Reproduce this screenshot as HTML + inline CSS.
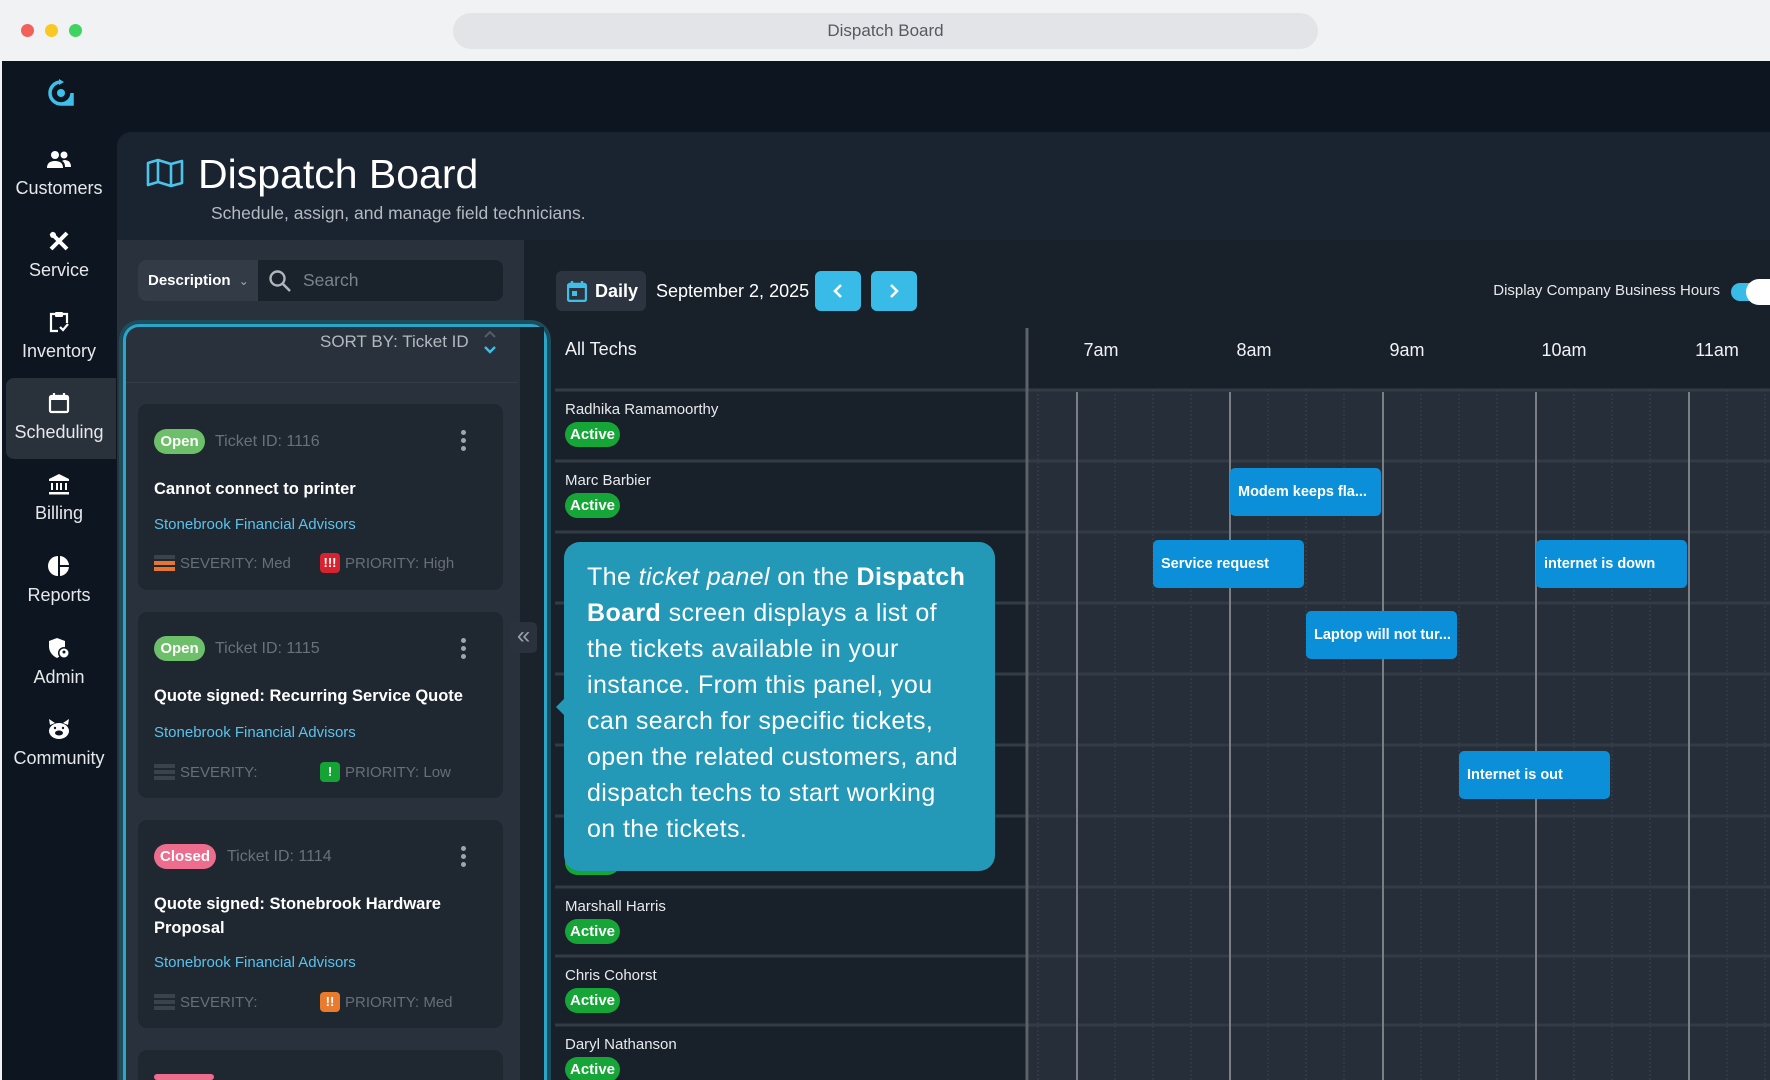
<!DOCTYPE html>
<html style="overflow:hidden;width:1770px;height:1080px"><head><meta charset="utf-8">
<style>
*{margin:0;padding:0;box-sizing:border-box}
body{width:1770px;height:1080px;overflow:hidden;background:#f2f3f5;font-family:"Liberation Sans",Arial,sans-serif;position:relative}
.a{position:absolute}
.nav{position:absolute;left:2px;width:114px;text-align:center;color:#e6e8ea;font-size:18px}
.nav svg{display:block;margin:0 auto 8px}
.card{position:absolute;left:138px;width:365px;background:#1f2731;border-radius:9px}
.badge{position:absolute;left:16px;height:25px;border-radius:13px;color:#fff;font-weight:bold;font-size:15px;line-height:25px;text-align:center}
.tid{position:absolute;color:#697079;font-size:16px}
.dots{position:absolute;left:323px;width:5px}
.dots i{display:block;width:5px;height:5px;border-radius:50%;background:#a0a5ab;margin-bottom:3px}
.ttl{position:absolute;left:16px;right:20px;color:#fff;font-weight:bold;font-size:16.5px;line-height:24px}
.lnk{position:absolute;left:16px;color:#5dc1ea;font-size:15px}
.sev{position:absolute;left:16px;color:#676e77;font-size:15px;display:flex;align-items:center}
.bars{width:21px;margin-right:5px}
.bars i{display:block;height:4px;margin:2px 0;background:#3a424c}
.pri{position:absolute;left:182px;color:#676e77;font-size:15px;display:flex;align-items:center}
.pi{width:20px;height:20px;border-radius:4px;color:#fff;font-weight:bold;font-size:13px;text-align:center;line-height:20px;margin-right:5px}
.name{position:absolute;left:565px;color:#e8eaec;font-size:15px}
.act{position:absolute;left:565px;width:55px;height:25px;border-radius:13px;background:#16a637;color:#fff;font-weight:bold;font-size:15px;line-height:25px;text-align:center}
.ev{position:absolute;height:48px;background:#0a8fd8;border-radius:5px;color:#fff;font-weight:bold;font-size:14.5px;line-height:48px;padding-left:8px;white-space:nowrap;overflow:hidden}
.hr{position:absolute;top:340px;color:#f0f2f4;font-size:18px;transform:translateX(-50%)}
</style></head><body>
<div class="a" style="left:0;top:0;width:1770px;height:61px;background:#f1f2f4"></div>
<div class="a" style="left:21px;top:24px;width:13px;height:13px;border-radius:50%;background:#f2605b"></div>
<div class="a" style="left:45px;top:24px;width:13px;height:13px;border-radius:50%;background:#f9c823"></div>
<div class="a" style="left:69px;top:24px;width:13px;height:13px;border-radius:50%;background:#3fd461"></div>
<div class="a" style="left:453px;top:13px;width:865px;height:36px;border-radius:18px;background:#e3e4e7;text-align:center;line-height:36px;color:#555a60;font-size:17px">Dispatch Board</div>
<div class="a" style="left:2px;top:61px;width:1768px;height:1019px;background:#0d1620;overflow:hidden"></div>
<svg class="a" style="left:46px;top:78px" width="30" height="30" viewBox="0 0 30 30"><path d="M15 4 A11 11 0 1 0 26 15 L26 26 L15 26" fill="none" stroke="#3ec0ea" stroke-width="3.5"/><circle cx="15" cy="15" r="4" fill="#3ec0ea"/><path d="M13 1 L18 4 L13 7Z" fill="#3ec0ea"/></svg>
<div class="nav" style="top:150px"><svg width="24" height="20" viewBox="0 0 24 20"><circle cx="8" cy="5" r="4" fill="#fff"/><circle cx="17" cy="5" r="3.5" fill="#fff"/><path d="M0 18 Q0 11 8 11 Q16 11 16 18Z M17 10 Q24 10 24 17 L18 17 Q18 12 15 11Z" fill="#fff"/></svg>Customers</div>
<div class="nav" style="top:230px"><svg width="22" height="22" viewBox="0 0 22 22"><path d="M3 3 L19 19 M19 3 L3 19" stroke="#fff" stroke-width="4"/><circle cx="5" cy="5" r="3" fill="#fff"/></svg>Service</div>
<div class="nav" style="top:311px"><svg width="20" height="22" viewBox="0 0 20 22"><path d="M6 3 H2 V20 H9 M14 3 H18 V12" fill="none" stroke="#fff" stroke-width="2.2"/><rect x="6" y="1" width="8" height="5" rx="1" fill="#fff"/><path d="M11 16 L14 19 L19 13" fill="none" stroke="#fff" stroke-width="2.2"/></svg>Inventory</div>
<div class="a" style="left:6px;top:378px;width:110px;height:81px;background:#29313b;border-radius:8px 0 0 8px"></div>
<div class="nav" style="top:392px"><svg width="22" height="22" viewBox="0 0 22 22"><rect x="2" y="4" width="18" height="16" rx="1.5" fill="none" stroke="#fff" stroke-width="2.2"/><rect x="2" y="4" width="18" height="4" fill="#fff"/><path d="M6 1V5M16 1V5" stroke="#fff" stroke-width="2.2"/></svg>Scheduling</div>
<div class="nav" style="top:473px"><svg width="22" height="22" viewBox="0 0 22 22"><path d="M11 1 L21 6 L21 8 L1 8 L1 6Z" fill="#fff"/><path d="M4 10V17M9 10V17M13 10V17M18 10V17" stroke="#fff" stroke-width="2"/><rect x="1" y="19" width="20" height="2.5" fill="#fff"/></svg>Billing</div>
<div class="nav" style="top:555px"><svg width="22" height="22" viewBox="0 0 22 22"><path d="M10 1 A10 10 0 1 0 10 21Z" fill="#fff"/><path d="M12 1 A10 10 0 0 1 21 10 L12 10Z M12 12 L21 12 A10 10 0 0 1 12 21Z" fill="#fff"/></svg>Reports</div>
<div class="nav" style="top:637px"><svg width="22" height="22" viewBox="0 0 22 22"><path d="M9 1 L17 4 V9 Q17 17 9 21 Q1 17 1 9 V4Z" fill="#fff"/><circle cx="16" cy="16" r="6" fill="#0d1620"/><circle cx="16" cy="16" r="4.5" fill="#fff"/><circle cx="16" cy="15" r="1.5" fill="#0d1620"/></svg>Admin</div>
<div class="nav" style="top:718px"><svg width="24" height="22" viewBox="0 0 24 22"><ellipse cx="12" cy="13" rx="10" ry="8" fill="#fff"/><path d="M3 7 L2 1 L8 5Z M21 7 L22 1 L16 5Z" fill="#fff"/><ellipse cx="12" cy="15" rx="4" ry="2.5" fill="#0d1620"/><circle cx="8" cy="10" r="1.2" fill="#0d1620"/><circle cx="16" cy="10" r="1.2" fill="#0d1620"/></svg>Community</div>
<div class="a" style="left:117px;top:132px;width:1653px;height:108px;background:#1a2330;border-radius:14px 0 0 0"></div>
<svg class="a" style="left:146px;top:158px" width="38" height="30" viewBox="0 0 38 30"><path d="M2 5 L12 2 L25 6 L36 3 V25 L25 28 L12 24 L2 27Z M12 2 V24 M25 6 V28" fill="none" stroke="#4ec3ea" stroke-width="2.6" stroke-linejoin="round"/></svg>
<div class="a" style="left:198px;top:150px;color:#fff;font-size:41px;line-height:48px">Dispatch Board</div>
<div class="a" style="left:211px;top:203px;color:#b5bac0;font-size:17.5px">Schedule, assign, and manage field technicians.</div>
<div class="a" style="left:117px;top:240px;width:407px;height:840px;background:#28313c"></div>
<div class="a" style="left:138px;top:260px;width:365px;height:41px;background:#1a222c;border-radius:8px"></div>
<div class="a" style="left:138px;top:260px;width:120px;height:41px;background:#323b46;border-radius:8px 0 0 8px;color:#fff;font-weight:bold;font-size:15px;line-height:41px;padding-left:10px">Description <span style="font-weight:normal;color:#aaa;font-size:12px;margin-left:4px">&#8964;</span></div>
<svg class="a" style="left:268px;top:269px" width="24" height="24" viewBox="0 0 24 24"><circle cx="9.5" cy="9.5" r="7" fill="none" stroke="#b0b5bb" stroke-width="2.4"/><path d="M15 15 L22 22" stroke="#b0b5bb" stroke-width="2.6"/></svg>
<div class="a" style="left:303px;top:270px;color:#7b828a;font-size:17.5px">Search</div>
<div class="a" style="left:524px;top:240px;width:1246px;height:840px;background:#18202a"></div>
<div class="a" style="left:119px;top:320px;width:432px;height:760px;border:4px solid #1d4c5d;border-bottom:none;border-radius:20px 20px 0 0"></div>
<div class="a" style="left:123px;top:324px;width:424px;height:756px;border:3px solid #2aa6c8;border-bottom:none;border-radius:16px 16px 0 0;background:#28313c"></div>
<div class="a" style="left:126px;top:382px;width:392px;height:1px;background:#333c47"></div>
<div class="a" style="left:520px;top:327px;width:24px;height:753px;background:#1a222c"></div>
<div class="a" style="left:320px;top:332px;color:#b4b9bf;font-size:17px">SORT BY: Ticket ID</div>
<svg class="a" style="left:482px;top:329px" width="16" height="28" viewBox="0 0 16 28"><path d="M3 8 L8 3 L13 8" fill="none" stroke="#555d66" stroke-width="2"/><path d="M3 18 L8 23 L13 18" fill="none" stroke="#3ebfe8" stroke-width="2.4"/></svg>
<div class="card" style="top:404px;height:186px">
 <div class="badge" style="top:25px;width:51px;background:#6dbf69">Open</div>
 <div class="tid" style="left:77px;top:25px;line-height:25px">Ticket ID: 1116</div>
 <div class="dots" style="top:26px"><i></i><i></i><i></i></div>
 <div class="ttl" style="top:73px">Cannot connect to printer</div>
 <div class="lnk" style="top:112px">Stonebrook Financial Advisors</div>
 <div class="sev" style="top:149px"><div class="bars"><i></i><i style="background:#e8742d"></i><i style="background:#e8742d"></i></div>SEVERITY: Med</div>
 <div class="pri" style="top:149px"><div class="pi" style="background:#d8232e">!!!</div>PRIORITY: High</div>
</div>
<div class="card" style="top:612px;height:186px">
 <div class="badge" style="top:24px;width:51px;background:#6dbf69">Open</div>
 <div class="tid" style="left:77px;top:24px;line-height:25px">Ticket ID: 1115</div>
 <div class="dots" style="top:26px"><i></i><i></i><i></i></div>
 <div class="ttl" style="top:72px">Quote signed: Recurring Service Quote</div>
 <div class="lnk" style="top:112px">Stonebrook Financial Advisors</div>
 <div class="sev" style="top:150px"><div class="bars"><i></i><i></i><i></i></div>SEVERITY:</div>
 <div class="pri" style="top:150px"><div class="pi" style="background:#14a334">!</div>PRIORITY: Low</div>
</div>
<div class="card" style="top:820px;height:208px">
 <div class="badge" style="top:24px;width:62px;background:#ec6d8e">Closed</div>
 <div class="tid" style="left:89px;top:24px;line-height:25px">Ticket ID: 1114</div>
 <div class="dots" style="top:26px"><i></i><i></i><i></i></div>
 <div class="ttl" style="top:72px">Quote signed: Stonebrook Hardware<br>Proposal</div>
 <div class="lnk" style="top:134px">Stonebrook Financial Advisors</div>
 <div class="sev" style="top:172px"><div class="bars"><i></i><i></i><i></i></div>SEVERITY:</div>
 <div class="pri" style="top:172px"><div class="pi" style="background:#ea7a2c">!!</div>PRIORITY: Med</div>
</div>
<div class="card" style="top:1050px;height:30px;border-radius:9px 9px 0 0"><div class="badge" style="top:24px;width:60px;height:6px;background:#ec6d8e"></div></div>
<div class="a" style="left:510px;top:622px;width:27px;height:31px;background:#2a323d;border-radius:5px;color:#9aa0a7;font-size:24px;line-height:28px;text-align:center">&laquo;</div>
<div class="a" style="left:556px;top:271px;width:90px;height:40px;background:#2c3440;border-radius:6px"></div>
<svg class="a" style="left:567px;top:280px" width="20" height="22" viewBox="0 0 20 22"><rect x="1" y="4" width="18" height="17" rx="2" fill="none" stroke="#3ebfe8" stroke-width="2.4"/><rect x="1" y="4" width="18" height="4" fill="#3ebfe8"/><path d="M5 1V5M15 1V5" stroke="#3ebfe8" stroke-width="2.4"/><rect x="5" y="11" width="5" height="5" fill="#3ebfe8"/></svg>
<div class="a" style="left:595px;top:281px;color:#fff;font-weight:bold;font-size:18px">Daily</div>
<div class="a" style="left:656px;top:281px;color:#fff;font-size:18px">September 2, 2025</div>
<div class="a" style="left:815px;top:271px;width:46px;height:40px;background:#38bbe6;border-radius:6px"></div>
<div class="a" style="left:871px;top:271px;width:46px;height:40px;background:#38bbe6;border-radius:6px"></div>
<svg class="a" style="left:830px;top:283px" width="16" height="16"><path d="M11 2 L5 8 L11 14" fill="none" stroke="#fff" stroke-width="2.6"/></svg>
<svg class="a" style="left:886px;top:283px" width="16" height="16"><path d="M5 2 L11 8 L5 14" fill="none" stroke="#fff" stroke-width="2.6"/></svg>
<div class="a" style="left:1400px;top:282px;width:320px;text-align:right;color:#e6e8ea;font-size:15px">Display Company Business Hours</div>
<div class="a" style="left:1731px;top:283px;width:39px;height:18px;border-radius:9px 0 0 9px;background:#38bbe6"></div>
<div class="a" style="left:1746px;top:279px;width:24px;height:26px;border-radius:13px 0 0 13px;background:#fff"></div>
<div class="a" style="left:565px;top:339px;color:#f0f2f4;font-size:18px">All Techs</div>
<div class="hr" style="left:1101px">7am</div>
<div class="hr" style="left:1254px">8am</div>
<div class="hr" style="left:1407px">9am</div>
<div class="hr" style="left:1564px">10am</div>
<div class="hr" style="left:1717px">11am</div>
<svg class="a" style="left:0;top:0" width="1770" height="1080">
 <rect x="1029" y="390" width="741" height="690" fill="#262e39"/>
 <g stroke="#3b434d" stroke-width="1" stroke-dasharray="2 2">
  <line x1="1038" y1="390" x2="1038" y2="1080"/><line x1="1115" y1="390" x2="1115" y2="1080"/><line x1="1153" y1="390" x2="1153" y2="1080"/><line x1="1191" y1="390" x2="1191" y2="1080"/>
  <line x1="1268" y1="390" x2="1268" y2="1080"/><line x1="1306" y1="390" x2="1306" y2="1080"/><line x1="1344" y1="390" x2="1344" y2="1080"/>
  <line x1="1421" y1="390" x2="1421" y2="1080"/><line x1="1459" y1="390" x2="1459" y2="1080"/><line x1="1497" y1="390" x2="1497" y2="1080"/>
  <line x1="1574" y1="390" x2="1574" y2="1080"/><line x1="1612" y1="390" x2="1612" y2="1080"/><line x1="1650" y1="390" x2="1650" y2="1080"/>
  <line x1="1727" y1="390" x2="1727" y2="1080"/><line x1="1765" y1="390" x2="1765" y2="1080"/>
 </g>
 <g stroke="#333b46" stroke-width="3">
  <line x1="555" y1="390" x2="1770" y2="390"/><line x1="555" y1="461" x2="1770" y2="461"/><line x1="555" y1="532" x2="1770" y2="532"/><line x1="555" y1="603" x2="1770" y2="603"/><line x1="555" y1="674" x2="1770" y2="674"/><line x1="555" y1="745" x2="1770" y2="745"/><line x1="555" y1="816" x2="1770" y2="816"/><line x1="555" y1="887" x2="1770" y2="887"/><line x1="555" y1="956" x2="1770" y2="956"/><line x1="555" y1="1025" x2="1770" y2="1025"/>
 </g>
 <g stroke="#7a7f86" stroke-width="2">
  <line x1="1077" y1="392" x2="1077" y2="1080"/><line x1="1230" y1="392" x2="1230" y2="1080"/><line x1="1383" y1="392" x2="1383" y2="1080"/><line x1="1536" y1="392" x2="1536" y2="1080"/><line x1="1689" y1="392" x2="1689" y2="1080"/>
 </g>
 <line x1="1027" y1="328" x2="1027" y2="1080" stroke="#5c6269" stroke-width="3"/>
</svg>
<div class="name" style="top:401px">Radhika Ramamoorthy</div><div class="act" style="top:422px">Active</div>
<div class="name" style="top:472px">Marc Barbier</div><div class="act" style="top:493px">Active</div>
<div class="act" style="top:850px">Active</div>
<div class="name" style="top:898px">Marshall Harris</div><div class="act" style="top:919px">Active</div>
<div class="name" style="top:967px">Chris Cohorst</div><div class="act" style="top:988px">Active</div>
<div class="name" style="top:1036px">Daryl Nathanson</div><div class="act" style="top:1057px">Active</div>
<div class="ev" style="left:1230px;top:468px;width:151px">Modem keeps fla...</div>
<div class="ev" style="left:1153px;top:540px;width:151px">Service request</div>
<div class="ev" style="left:1536px;top:540px;width:151px">internet is down</div>
<div class="ev" style="left:1306px;top:611px;width:151px">Laptop will not tur...</div>
<div class="ev" style="left:1459px;top:751px;width:151px">Internet is out</div>
<div class="a" style="left:564px;top:542px;width:431px;height:329px;background:#2399b7;border-radius:16px;color:#fff;font-size:25px;line-height:36px;padding:17px 0 0 23px;white-space:nowrap;letter-spacing:0.4px">The <i>ticket panel</i> on the <b>Dispatch</b><br><b>Board</b> screen displays a list of<br>the tickets available in your<br>instance. From this panel, you<br>can search for specific tickets,<br>open the related customers, and<br>dispatch techs to start working<br>on the tickets.</div>
<div class="a" style="left:556px;top:698px;width:0;height:0;border-top:9px solid transparent;border-bottom:9px solid transparent;border-right:9px solid #2399b7"></div>
</body></html>
